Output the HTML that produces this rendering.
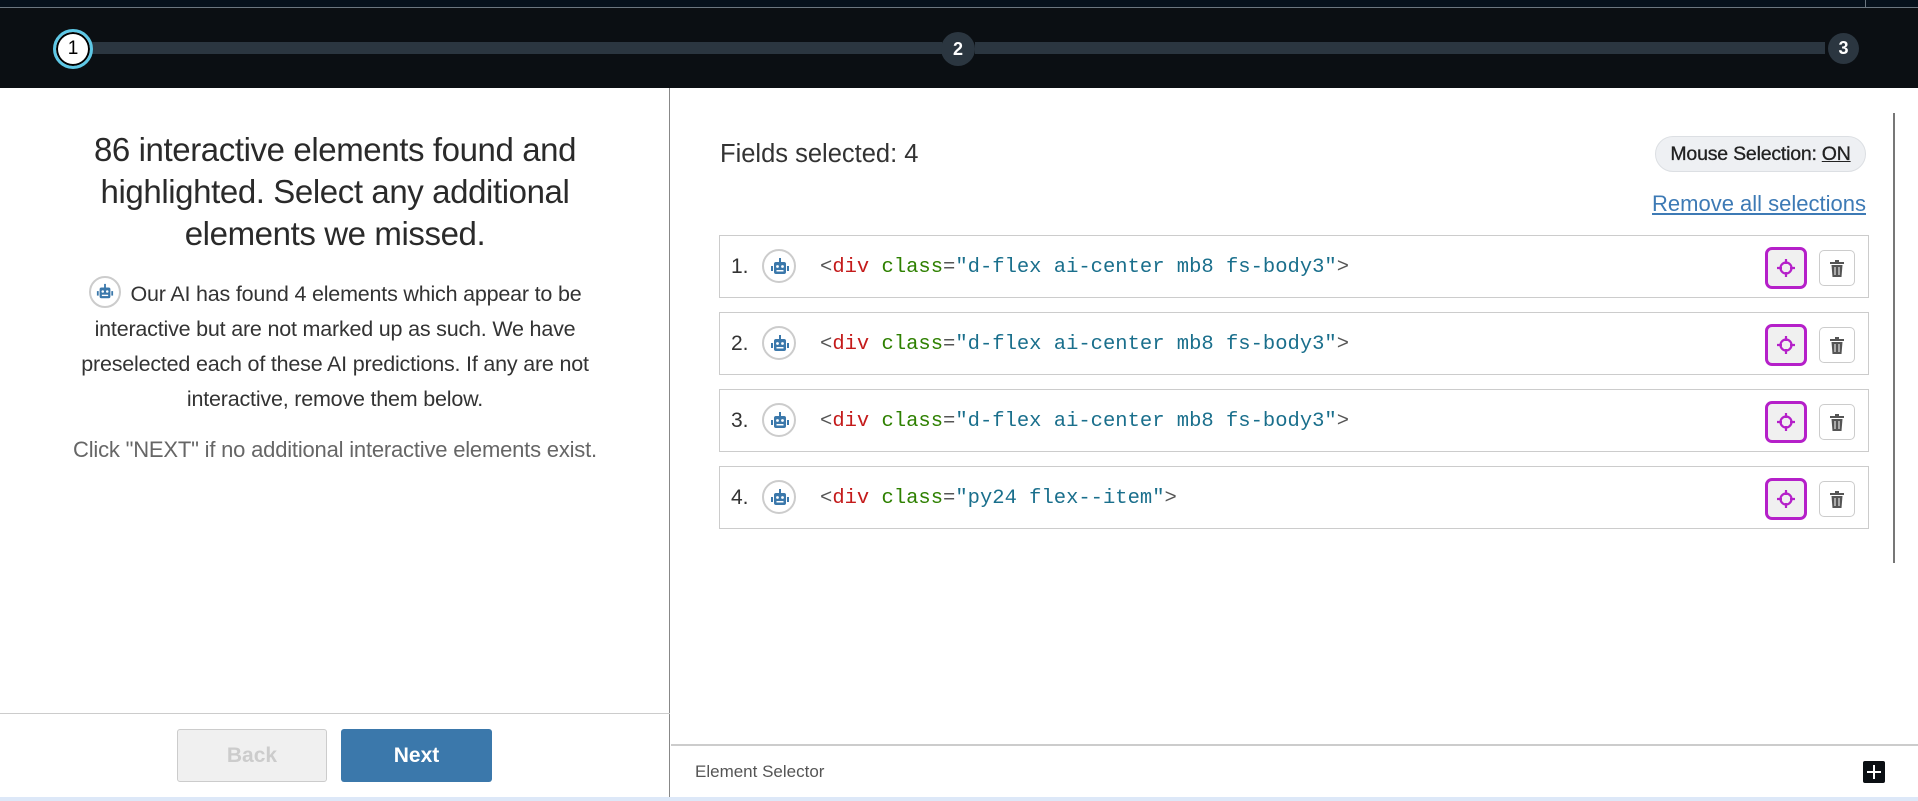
<!DOCTYPE html>
<html><head><meta charset="utf-8"><style>
*{box-sizing:border-box;margin:0;padding:0}
body{width:1918px;height:801px;overflow:hidden;background:#fff;font-family:"Liberation Sans",sans-serif;position:relative;color:#333}
.top{position:absolute;left:0;top:0;width:1918px;height:88px;background:#0b0f13}
.top .strip{position:absolute;left:0;top:0;width:1918px;height:8px;background:#06111c;border-bottom:1px solid #6b7680}
.top .tick{position:absolute;left:1865px;top:0;width:1px;height:8px;background:#6b7680}
.bar{position:absolute;top:42px;height:12px;background:#2b3640}
.step{position:absolute;border-radius:50%;background:#2b3640;color:#fff;font-weight:bold;font-size:18px;display:flex;align-items:center;justify-content:center}
.s1{left:53px;top:29px;width:40px;height:40px;background:#fff;color:#000;border:3px solid #5ec8e6;box-shadow:inset 0 0 0 2px #000;font-weight:normal;font-size:19px}
.left{position:absolute;left:0;top:88px;width:670px;height:713px;border-right:1px solid #888}
h1{position:absolute;left:0;width:670px;top:41px;text-align:center;font-weight:normal;font-size:33px;line-height:42px;color:#2a2a2a;letter-spacing:-0.4px;white-space:nowrap}
.p{position:absolute;left:0;width:670px;top:189px;text-align:center;font-size:21.5px;line-height:35px;color:#333;white-space:nowrap;letter-spacing:-0.2px}
.p2{position:absolute;left:0;width:670px;top:349px;text-align:center;font-size:22px;color:#666;white-space:nowrap;letter-spacing:-0.2px}
.robot{display:inline-block;width:34px;height:34px;border-radius:50%;border:2px solid #ccc;vertical-align:middle;position:relative;background:#fff}
.robot svg{position:absolute;left:6px;top:6px}
.foot{position:absolute;left:0;top:625px;width:670px;height:1px;background:#ccc}
.btn{position:absolute;top:641px;height:53px;border-radius:3px;font-size:21px;font-weight:bold;display:flex;align-items:center;justify-content:center}
.back{left:177px;width:150px;background:#f0f0f0;border:1px solid #ccc;color:#ccc}
.next{left:341px;width:151px;background:#3b78ab;color:#fff}
.fs{position:absolute;left:720px;top:140px;font-size:25.5px;color:#333}
.pill{position:absolute;left:1655px;top:136px;width:211px;height:36px;border-radius:18px;background:#eef0f3;border:1px solid #dcdfe3;font-size:19.5px;color:#222;display:flex;align-items:center;justify-content:center;letter-spacing:-0.2px;-webkit-text-stroke:0.3px #222}
.pill u{margin-left:5px}
.rm{position:absolute;right:52px;top:191px;font-size:22px;color:#3d7ab5;text-decoration:underline}
.row{position:absolute;left:719px;width:1150px;height:63px;border:1px solid #ccc}
.row .n{position:absolute;left:11px;top:19px;font-size:21px;color:#333}
.row .robot{position:absolute;left:42px;top:13px}
.row .code{position:absolute;left:100px;top:20px;font-family:"Liberation Mono","DejaVu Sans Mono",monospace;font-size:20.5px;color:#1a6f8c;white-space:pre}
.t{color:#c41a1a}.a{color:#2e8000}.g{color:#555}
.tg{position:absolute;left:1045px;top:11px;width:42px;height:42px;border:3px solid #b520c9;border-radius:7px;background:#f0f0f0;display:flex;align-items:center;justify-content:center}
.tr{position:absolute;left:1099px;top:14px;width:36px;height:36px;border:1px solid #ccc;border-radius:5px;background:#fff;display:flex;align-items:center;justify-content:center}
.scroll{position:absolute;left:1893px;top:113px;width:2px;height:450px;background:#777}
.bl{position:absolute;left:671px;top:744px;width:1247px;height:2px;background:#ccc}
.es{position:absolute;left:695px;top:762px;font-size:17px;color:#555}
.plus{position:absolute;left:1863px;top:761px;width:22px;height:22px;background:#0b0f13;border-radius:2px}
.plus:before{content:"";position:absolute;left:10px;top:4px;width:2px;height:14px;background:#fff}
.plus:after{content:"";position:absolute;left:4px;top:10px;width:14px;height:2px;background:#fff}
.bot{position:absolute;left:0;top:797px;width:1918px;height:4px;background:#dde8f8}
</style></head><body>
<div class="top"><div class="strip"></div><div class="tick"></div>
<div class="bar" style="left:92px;width:850px"></div>
<div class="bar" style="left:975px;width:850px"></div>
<div class="step s1">1</div>
<div class="step" style="left:941px;top:32px;width:34px;height:34px">2</div>
<div class="step" style="left:1828px;top:33px;width:31px;height:31px">3</div>
</div>
<div class="left">
<h1>86 interactive elements found and<br>highlighted. Select any additional<br>elements we missed.</h1>
<div class="p"><span class="robot" style="width:32px;height:32px;margin-right:10px;top:-3px"><svg width="18" height="18" viewBox="0 0 20 20" style="left:5px;top:5px"><rect x="9" y="1" width="2" height="4" fill="#3b78ab"/><rect x="4" y="5" width="12" height="12" rx="2" fill="#3b78ab"/><rect x="1" y="9" width="2" height="5" fill="#3b78ab"/><rect x="17" y="9" width="2" height="5" fill="#3b78ab"/><circle cx="7.5" cy="9.5" r="1.4" fill="#fff"/><circle cx="12.5" cy="9.5" r="1.4" fill="#fff"/><rect x="6.5" y="13" width="7" height="1.5" fill="#fff"/></svg></span>Our AI has found 4 elements which appear to be<br>interactive but are not marked up as such. We have<br>preselected each of these AI predictions. If any are not<br>interactive, remove them below.</div>
<div class="p2">Click "NEXT" if no additional interactive elements exist.</div>
<div class="foot"></div>
<div class="btn back">Back</div>
<div class="btn next">Next</div>
</div>
<div class="fs">Fields selected: 4</div>
<div class="pill">Mouse Selection: <u>ON</u></div>
<div class="rm">Remove all selections</div>
<div class="scroll"></div>

<div class="row" style="top:235px"><span class="n">1.</span><span class="robot"><svg width="20" height="20" viewBox="0 0 20 20"><rect x="9" y="1" width="2" height="4" fill="#3b78ab"/><rect x="4" y="5" width="12" height="12" rx="2" fill="#3b78ab"/><rect x="1" y="9" width="2" height="5" fill="#3b78ab"/><rect x="17" y="9" width="2" height="5" fill="#3b78ab"/><circle cx="7.5" cy="9.5" r="1.4" fill="#fff"/><circle cx="12.5" cy="9.5" r="1.4" fill="#fff"/><rect x="6.5" y="13" width="7" height="1.5" fill="#fff"/></svg></span><span class="code"><span class="g">&lt;</span><span class="t">div</span> <span class="a">class</span><span class="g">=</span>"d-flex ai-center mb8 fs-body3"<span class="g">&gt;</span></span><div class="tg"><svg width="20" height="20" viewBox="0 0 20 20" fill="none" stroke="#b520c9" stroke-width="2.2"><circle cx="10" cy="10" r="5.5"/><path d="M10 1v5M10 14v5M1 10h5M14 10h5"/></svg></div><div class="tr"><svg width="14" height="17" viewBox="0 0 14 17"><rect x="0" y="2" width="14" height="2" fill="#555"/><rect x="5" y="0" width="4" height="2" fill="#555"/><path d="M1.5 5h11l-1 12h-9z" fill="#555"/><path d="M5 7v8M9 7v8" stroke="#fff" stroke-width="1"/></svg></div></div>

<div class="row" style="top:312px"><span class="n">2.</span><span class="robot"><svg width="20" height="20" viewBox="0 0 20 20"><rect x="9" y="1" width="2" height="4" fill="#3b78ab"/><rect x="4" y="5" width="12" height="12" rx="2" fill="#3b78ab"/><rect x="1" y="9" width="2" height="5" fill="#3b78ab"/><rect x="17" y="9" width="2" height="5" fill="#3b78ab"/><circle cx="7.5" cy="9.5" r="1.4" fill="#fff"/><circle cx="12.5" cy="9.5" r="1.4" fill="#fff"/><rect x="6.5" y="13" width="7" height="1.5" fill="#fff"/></svg></span><span class="code"><span class="g">&lt;</span><span class="t">div</span> <span class="a">class</span><span class="g">=</span>"d-flex ai-center mb8 fs-body3"<span class="g">&gt;</span></span><div class="tg"><svg width="20" height="20" viewBox="0 0 20 20" fill="none" stroke="#b520c9" stroke-width="2.2"><circle cx="10" cy="10" r="5.5"/><path d="M10 1v5M10 14v5M1 10h5M14 10h5"/></svg></div><div class="tr"><svg width="14" height="17" viewBox="0 0 14 17"><rect x="0" y="2" width="14" height="2" fill="#555"/><rect x="5" y="0" width="4" height="2" fill="#555"/><path d="M1.5 5h11l-1 12h-9z" fill="#555"/><path d="M5 7v8M9 7v8" stroke="#fff" stroke-width="1"/></svg></div></div>

<div class="row" style="top:389px"><span class="n">3.</span><span class="robot"><svg width="20" height="20" viewBox="0 0 20 20"><rect x="9" y="1" width="2" height="4" fill="#3b78ab"/><rect x="4" y="5" width="12" height="12" rx="2" fill="#3b78ab"/><rect x="1" y="9" width="2" height="5" fill="#3b78ab"/><rect x="17" y="9" width="2" height="5" fill="#3b78ab"/><circle cx="7.5" cy="9.5" r="1.4" fill="#fff"/><circle cx="12.5" cy="9.5" r="1.4" fill="#fff"/><rect x="6.5" y="13" width="7" height="1.5" fill="#fff"/></svg></span><span class="code"><span class="g">&lt;</span><span class="t">div</span> <span class="a">class</span><span class="g">=</span>"d-flex ai-center mb8 fs-body3"<span class="g">&gt;</span></span><div class="tg"><svg width="20" height="20" viewBox="0 0 20 20" fill="none" stroke="#b520c9" stroke-width="2.2"><circle cx="10" cy="10" r="5.5"/><path d="M10 1v5M10 14v5M1 10h5M14 10h5"/></svg></div><div class="tr"><svg width="14" height="17" viewBox="0 0 14 17"><rect x="0" y="2" width="14" height="2" fill="#555"/><rect x="5" y="0" width="4" height="2" fill="#555"/><path d="M1.5 5h11l-1 12h-9z" fill="#555"/><path d="M5 7v8M9 7v8" stroke="#fff" stroke-width="1"/></svg></div></div>

<div class="row" style="top:466px"><span class="n">4.</span><span class="robot"><svg width="20" height="20" viewBox="0 0 20 20"><rect x="9" y="1" width="2" height="4" fill="#3b78ab"/><rect x="4" y="5" width="12" height="12" rx="2" fill="#3b78ab"/><rect x="1" y="9" width="2" height="5" fill="#3b78ab"/><rect x="17" y="9" width="2" height="5" fill="#3b78ab"/><circle cx="7.5" cy="9.5" r="1.4" fill="#fff"/><circle cx="12.5" cy="9.5" r="1.4" fill="#fff"/><rect x="6.5" y="13" width="7" height="1.5" fill="#fff"/></svg></span><span class="code"><span class="g">&lt;</span><span class="t">div</span> <span class="a">class</span><span class="g">=</span>"py24 flex--item"<span class="g">&gt;</span></span><div class="tg"><svg width="20" height="20" viewBox="0 0 20 20" fill="none" stroke="#b520c9" stroke-width="2.2"><circle cx="10" cy="10" r="5.5"/><path d="M10 1v5M10 14v5M1 10h5M14 10h5"/></svg></div><div class="tr"><svg width="14" height="17" viewBox="0 0 14 17"><rect x="0" y="2" width="14" height="2" fill="#555"/><rect x="5" y="0" width="4" height="2" fill="#555"/><path d="M1.5 5h11l-1 12h-9z" fill="#555"/><path d="M5 7v8M9 7v8" stroke="#fff" stroke-width="1"/></svg></div></div>

<div class="bl"></div>
<div class="es">Element Selector</div>
<div class="plus"></div>
<div class="bot"></div>
</body></html>
